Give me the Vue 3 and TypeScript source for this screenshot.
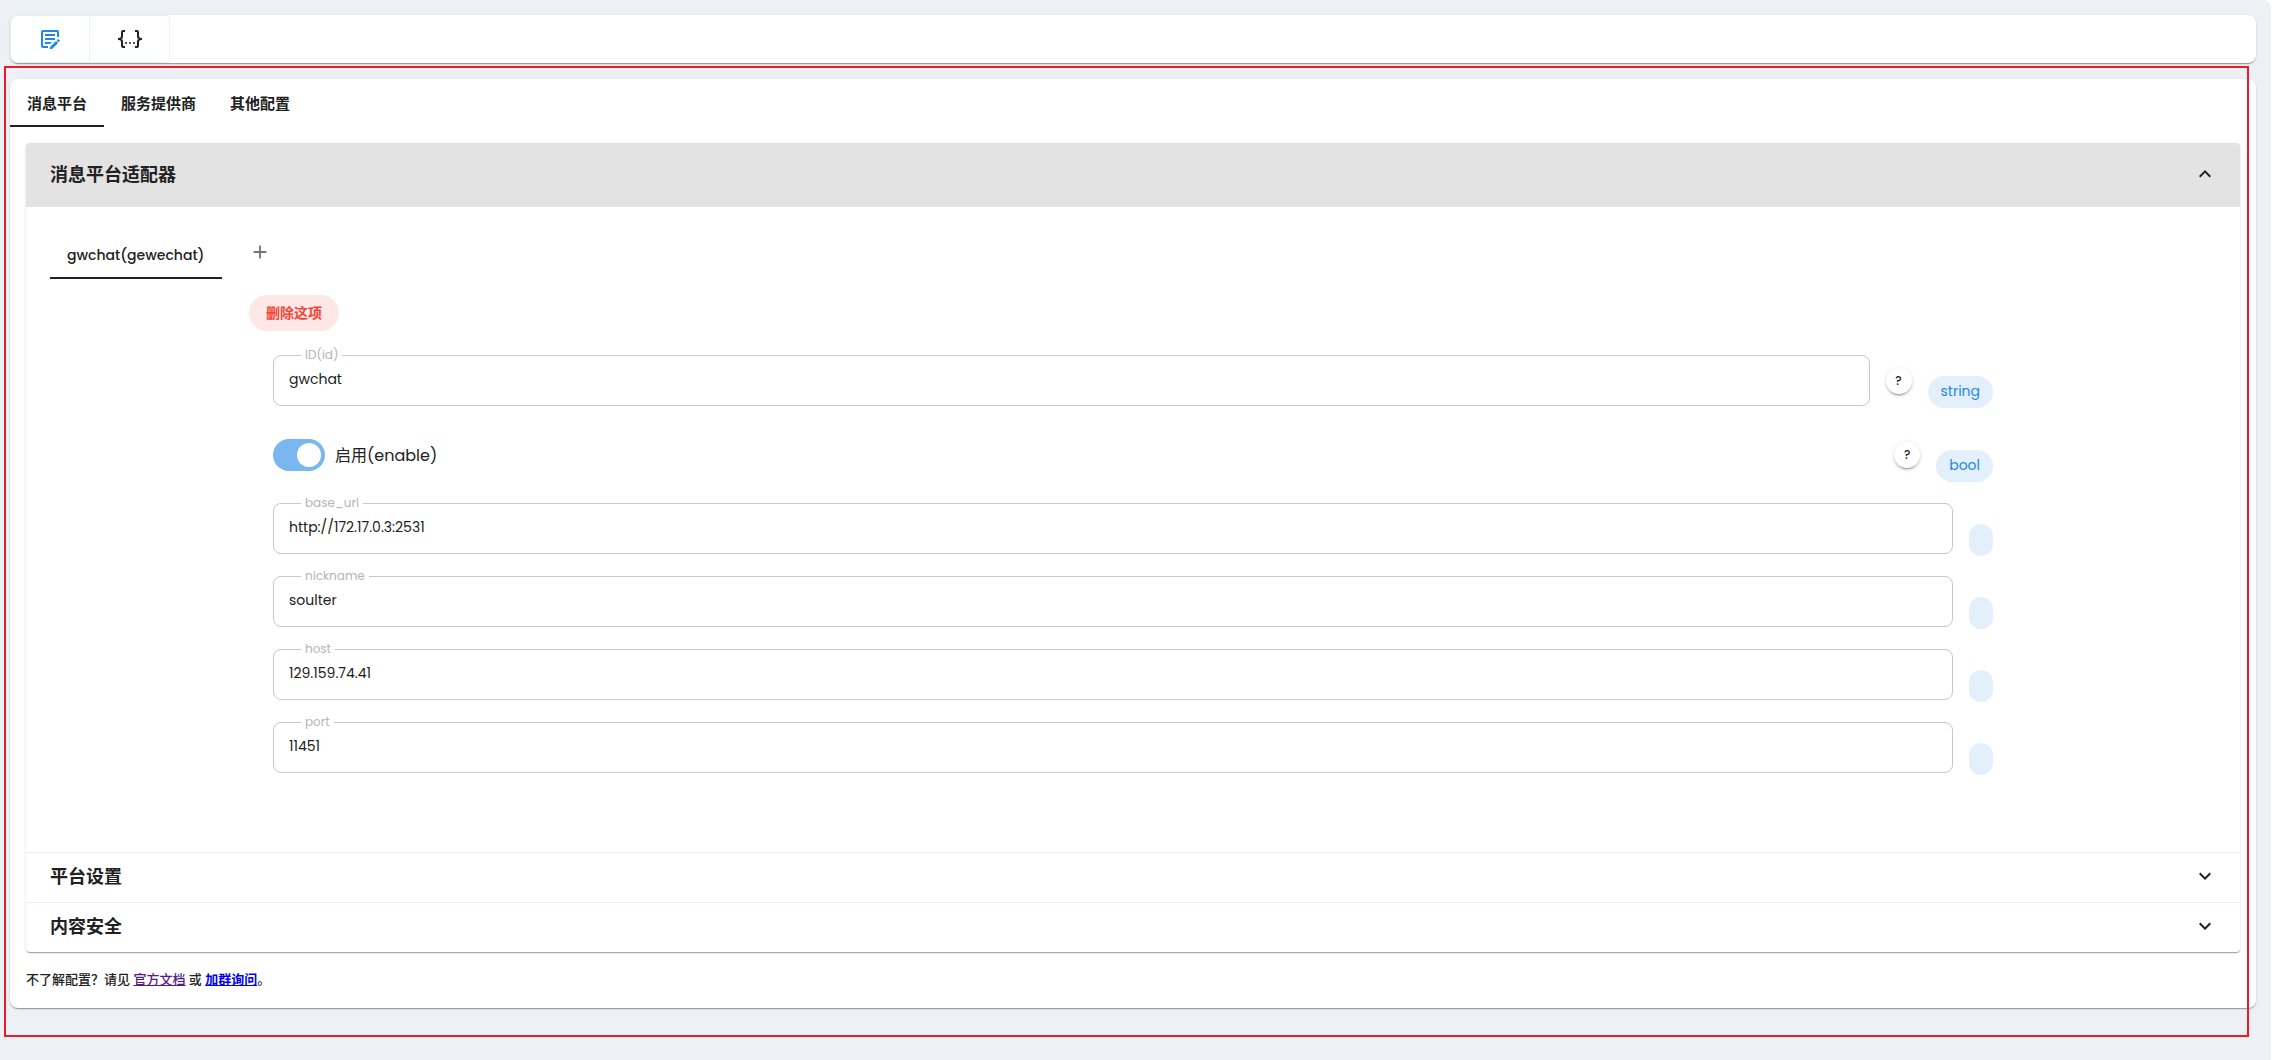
<script setup lang="ts">
import { reactive, ref } from 'vue'

interface Field {
  key: string
  label: string
  kind: 'text' | 'switch'
  type: string
  hint: boolean
}

const tabs = ['消息平台', '服务提供商', '其他配置']
const activeTab = ref(0)

const fields: Field[] = [
  { key: 'id', label: 'ID(id)', kind: 'text', type: 'string', hint: true },
  { key: 'enable', label: '启用(enable)', kind: 'switch', type: 'bool', hint: true },
  { key: 'base_url', label: 'base_url', kind: 'text', type: '', hint: false },
  { key: 'nickname', label: 'nickname', kind: 'text', type: '', hint: false },
  { key: 'host', label: 'host', kind: 'text', type: '', hint: false },
  { key: 'port', label: 'port', kind: 'text', type: '', hint: false },
]

const values = reactive<Record<string, string>>({
  id: 'gwchat',
  base_url: 'http://172.17.0.3:2531',
  nickname: 'soulter',
  host: '129.159.74.41',
  port: '11451',
})
const enabled = ref(true)
</script>

<template>
  <main class="page">
    <div class="card toolbar">
      <button class="mode active" type="button" aria-label="Visual editor">
        <svg viewBox="0 0 24 24" class="icon">
          <path d="M10 21H5a2 2 0 0 1-2-2V5a2 2 0 0 1 2-2h14a2 2 0 0 1 2 2v5h-2V5H5v14h5zM7 7h10v2H7zM7 11h10v2H7zM7 15h7l-2 2H7zM21.7 14.35l-1 1-2.05-2.05 1-1c.21-.22.56-.22.77 0l1.28 1.28c.22.21.22.56 0 .77M12 19.94l6.06-6.06 2.05 2.05L14.06 22H12z" />
        </svg>
      </button>
      <button class="mode" type="button" aria-label="Code editor">
        <svg viewBox="0 0 24 24" class="icon">
          <path d="M5 3h2v2H5v5a2 2 0 0 1-2 2 2 2 0 0 1 2 2v5h2v2H5c-1.07-.27-2-.9-2-2v-4a2 2 0 0 0-2-2H0v-2h1a2 2 0 0 0 2-2V5a2 2 0 0 1 2-2m14 0a2 2 0 0 1 2 2v4a2 2 0 0 0 2 2h1v2h-1a2 2 0 0 0-2 2v4a2 2 0 0 1-2 2h-2v-2h2v-5a2 2 0 0 1 2-2 2 2 0 0 1-2-2V5h-2V3zM12 15a1 1 0 1 1 0 2 1 1 0 0 1 0-2m-4 0a1 1 0 1 1 0 2 1 1 0 0 1 0-2m8 0a1 1 0 1 1 0 2 1 1 0 0 1 0-2" />
        </svg>
      </button>
    </div>

    <section class="config">
      <div class="card settings">
        <nav class="tabs">
          <button
            v-for="(tab, i) in tabs"
            :key="tab"
            type="button"
            class="tab"
            :class="{ active: activeTab === i }"
            @click="activeTab = i"
          >{{ tab }}</button>
        </nav>

        <div class="panels">
          <button type="button" class="panel-head open">
            消息平台适配器
            <svg viewBox="0 0 24 24" class="icon"><path d="M7.41 15.41 12 10.83l4.59 4.58L18 14l-6-6-6 6z" /></svg>
          </button>
          <div class="panel-body">
            <div class="tabs adapters">
              <button type="button" class="tab latin active">gwchat(gewechat)</button>
              <button type="button" class="add" aria-label="Add adapter">
                <svg viewBox="0 0 24 24" class="icon small"><path d="M19 13h-6v6h-2v-6H5v-2h6V5h2v6h6z" /></svg>
              </button>
            </div>

            <div class="form">
              <button type="button" class="remove">删除这项</button>
              <div v-for="f in fields" :key="f.key" class="row" :class="{ hinted: f.hint }">
                <div v-if="f.kind === 'text'" class="field">
                  <label :for="f.key">{{ f.label }}</label>
                  <input :id="f.key" v-model="values[f.key]" type="text" />
                </div>
                <div v-else class="toggle">
                  <input :id="f.key" v-model="enabled" type="checkbox" role="switch" />
                  <label :for="f.key">{{ f.label }}</label>
                </div>
                <button v-if="f.hint" type="button" class="hint">?</button>
                <span class="chip">{{ f.type }}</span>
              </div>
            </div>
          </div>
          <button type="button" class="panel-head">
            平台设置
            <svg viewBox="0 0 24 24" class="icon"><path d="M7.41 8.58 12 13.17l4.59-4.59L18 10l-6 6-6-6z" /></svg>
          </button>
          <button type="button" class="panel-head">
            内容安全
            <svg viewBox="0 0 24 24" class="icon"><path d="M7.41 8.58 12 13.17l4.59-4.59L18 10l-6 6-6-6z" /></svg>
          </button>
        </div>

        <p class="help">
          不了解配置？请见 <a class="visited" href="#docs">官方文档</a> 或 <a href="#group"><b>加群询问</b></a>。
        </p>
      </div>
      <div class="outline"></div>
    </section>
  </main>
</template>

<style>
body {
  margin: 0;
  background: #fff;
}
</style>

<style scoped>
.page {
  box-sizing: border-box;
  min-height: 100vh;
  margin-right: 14px;
  padding-top: 15px;
  border-top-right-radius: 8px;
  background: #edf0f5;
  color: #212121;
  font-family: Poppins, Inter, 'Noto Sans CJK SC', sans-serif;
  font-size: 14px;
}

.page * {
  box-sizing: border-box;
}

button,
input {
  margin: 0;
  padding: 0;
  border: 0;
  background: none;
  color: inherit;
  font: inherit;
}

.icon {
  display: block;
  width: 24px;
  height: 24px;
  fill: currentColor;
}

.icon.small {
  width: 22px;
  height: 22px;
}

.card {
  border-radius: 8px;
  background: #fff;
  box-shadow:
    0 2px 1px -1px rgba(0, 0, 0, 0.2),
    0 1px 1px rgba(0, 0, 0, 0.14),
    0 1px 3px rgba(0, 0, 0, 0.12);
}

.toolbar {
  display: flex;
  height: 48px;
  margin: 0 15px 0 10px;
}

.mode {
  display: flex;
  align-items: center;
  justify-content: center;
  width: 80px;
  border: 1px solid #e3f2fd;
  border-left-width: 0;
}

.mode:first-child {
  border-left-width: 1px;
  border-radius: 8px 0 0 8px;
}

.mode:last-child {
  border-radius: 0 4px 4px 0;
}

.mode.active {
  color: #1e88e5;
}

.config {
  position: relative;
  padding: 16px 15px 29px 10px;
}

.outline {
  position: absolute;
  inset: 3px 22px 0 4px;
  border: 2px solid #ed1c24;
  pointer-events: none;
}

.settings {
  padding-bottom: 16px;
}

.tabs {
  display: flex;
}

.tab {
  height: 48px;
  padding: 2px 17px 0;
  border-bottom: 2px solid transparent;
  font-size: 15px;
  font-weight: 700;
}

.tab.latin {
  font-size: 14px;
  font-weight: 500;
}

.tab.active {
  border-bottom-color: #212121;
}

.panels {
  margin: 16px 16px 0;
  border-radius: 4px;
  box-shadow:
    0 2px 1px -1px rgba(0, 0, 0, 0.2),
    0 1px 1px rgba(0, 0, 0, 0.14),
    0 1px 3px rgba(0, 0, 0, 0.12);
}

.panel-head {
  display: flex;
  align-items: center;
  justify-content: space-between;
  width: 100%;
  height: 50px;
  padding: 0 23px 3px 24px;
  border-top: 1px solid #e3f2fd;
  font-size: 18px;
  font-weight: 700;
}

.panel-head.open {
  height: 64px;
  border-top: 0;
  border-radius: 4px 4px 0 0;
  background: #e3e3e3;
}

.panel-body {
  padding: 18px 24px 41px;
}

.adapters {
  align-items: flex-end;
}

.add {
  display: flex;
  align-items: center;
  justify-content: center;
  width: 76px;
  height: 54px;
  color: #757575;
}

.form {
  max-width: 1800px;
  margin: 0 auto;
  padding: 16px;
}

.remove {
  display: block;
  height: 36px;
  margin-bottom: 24px;
  padding: 0 17px;
  border-radius: 18px;
  background: #fde8e6;
  color: #f44336;
  font-weight: 700;
}

.row {
  display: flex;
  align-items: flex-start;
  gap: 16px;
  height: 73px;
  padding: 0 24px;
}

.row.hinted {
  height: 74px;
}

.field {
  position: relative;
  flex: 1;
  height: 51px;
}

.field input {
  width: 100%;
  height: 51px;
  padding: 0 15px 2px;
  border: 1px solid #c8c8c8;
  border-radius: 8px;
}

.field label {
  position: absolute;
  top: -8px;
  left: 28px;
  padding: 0 4px;
  background: #fff;
  color: #b5b5b5;
  font-size: 12px;
  line-height: 16px;
}

.toggle {
  display: flex;
  flex: 1;
  align-items: center;
  gap: 10px;
  height: 51px;
  font-size: 16px;
}

.toggle input {
  display: flex;
  width: 52px;
  height: 32px;
  padding: 4px;
  border-radius: 16px;
  appearance: none;
  background: #bdbdbd;
}

.toggle input::before {
  width: 24px;
  height: 24px;
  border-radius: 50%;
  background: #fff;
  content: '';
}

.toggle input:checked {
  justify-content: flex-end;
  background: #7ab7ef;
}

.hint {
  width: 26px;
  height: 26px;
  margin-top: 13px;
  border-radius: 50%;
  background: #fff;
  box-shadow:
    0 3px 1px -2px rgba(0, 0, 0, 0.2),
    0 2px 2px rgba(0, 0, 0, 0.14),
    0 1px 5px rgba(0, 0, 0, 0.12);
  font-size: 12px;
  font-weight: 500;
}

.chip {
  height: 32px;
  margin-top: 21px;
  padding: 0 12px;
  border-radius: 16px;
  background: #e3f0fc;
  color: #1e88e5;
  line-height: 31px;
}

.chip:not(:empty) {
  padding: 0 13px;
}

.help {
  margin: 16px 16px 0;
  font-size: 13px;
  font-weight: 500;
  line-height: 24px;
}

.help a {
  color: #0000ee;
}

.help .visited {
  color: #551a8b;
}
</style>
